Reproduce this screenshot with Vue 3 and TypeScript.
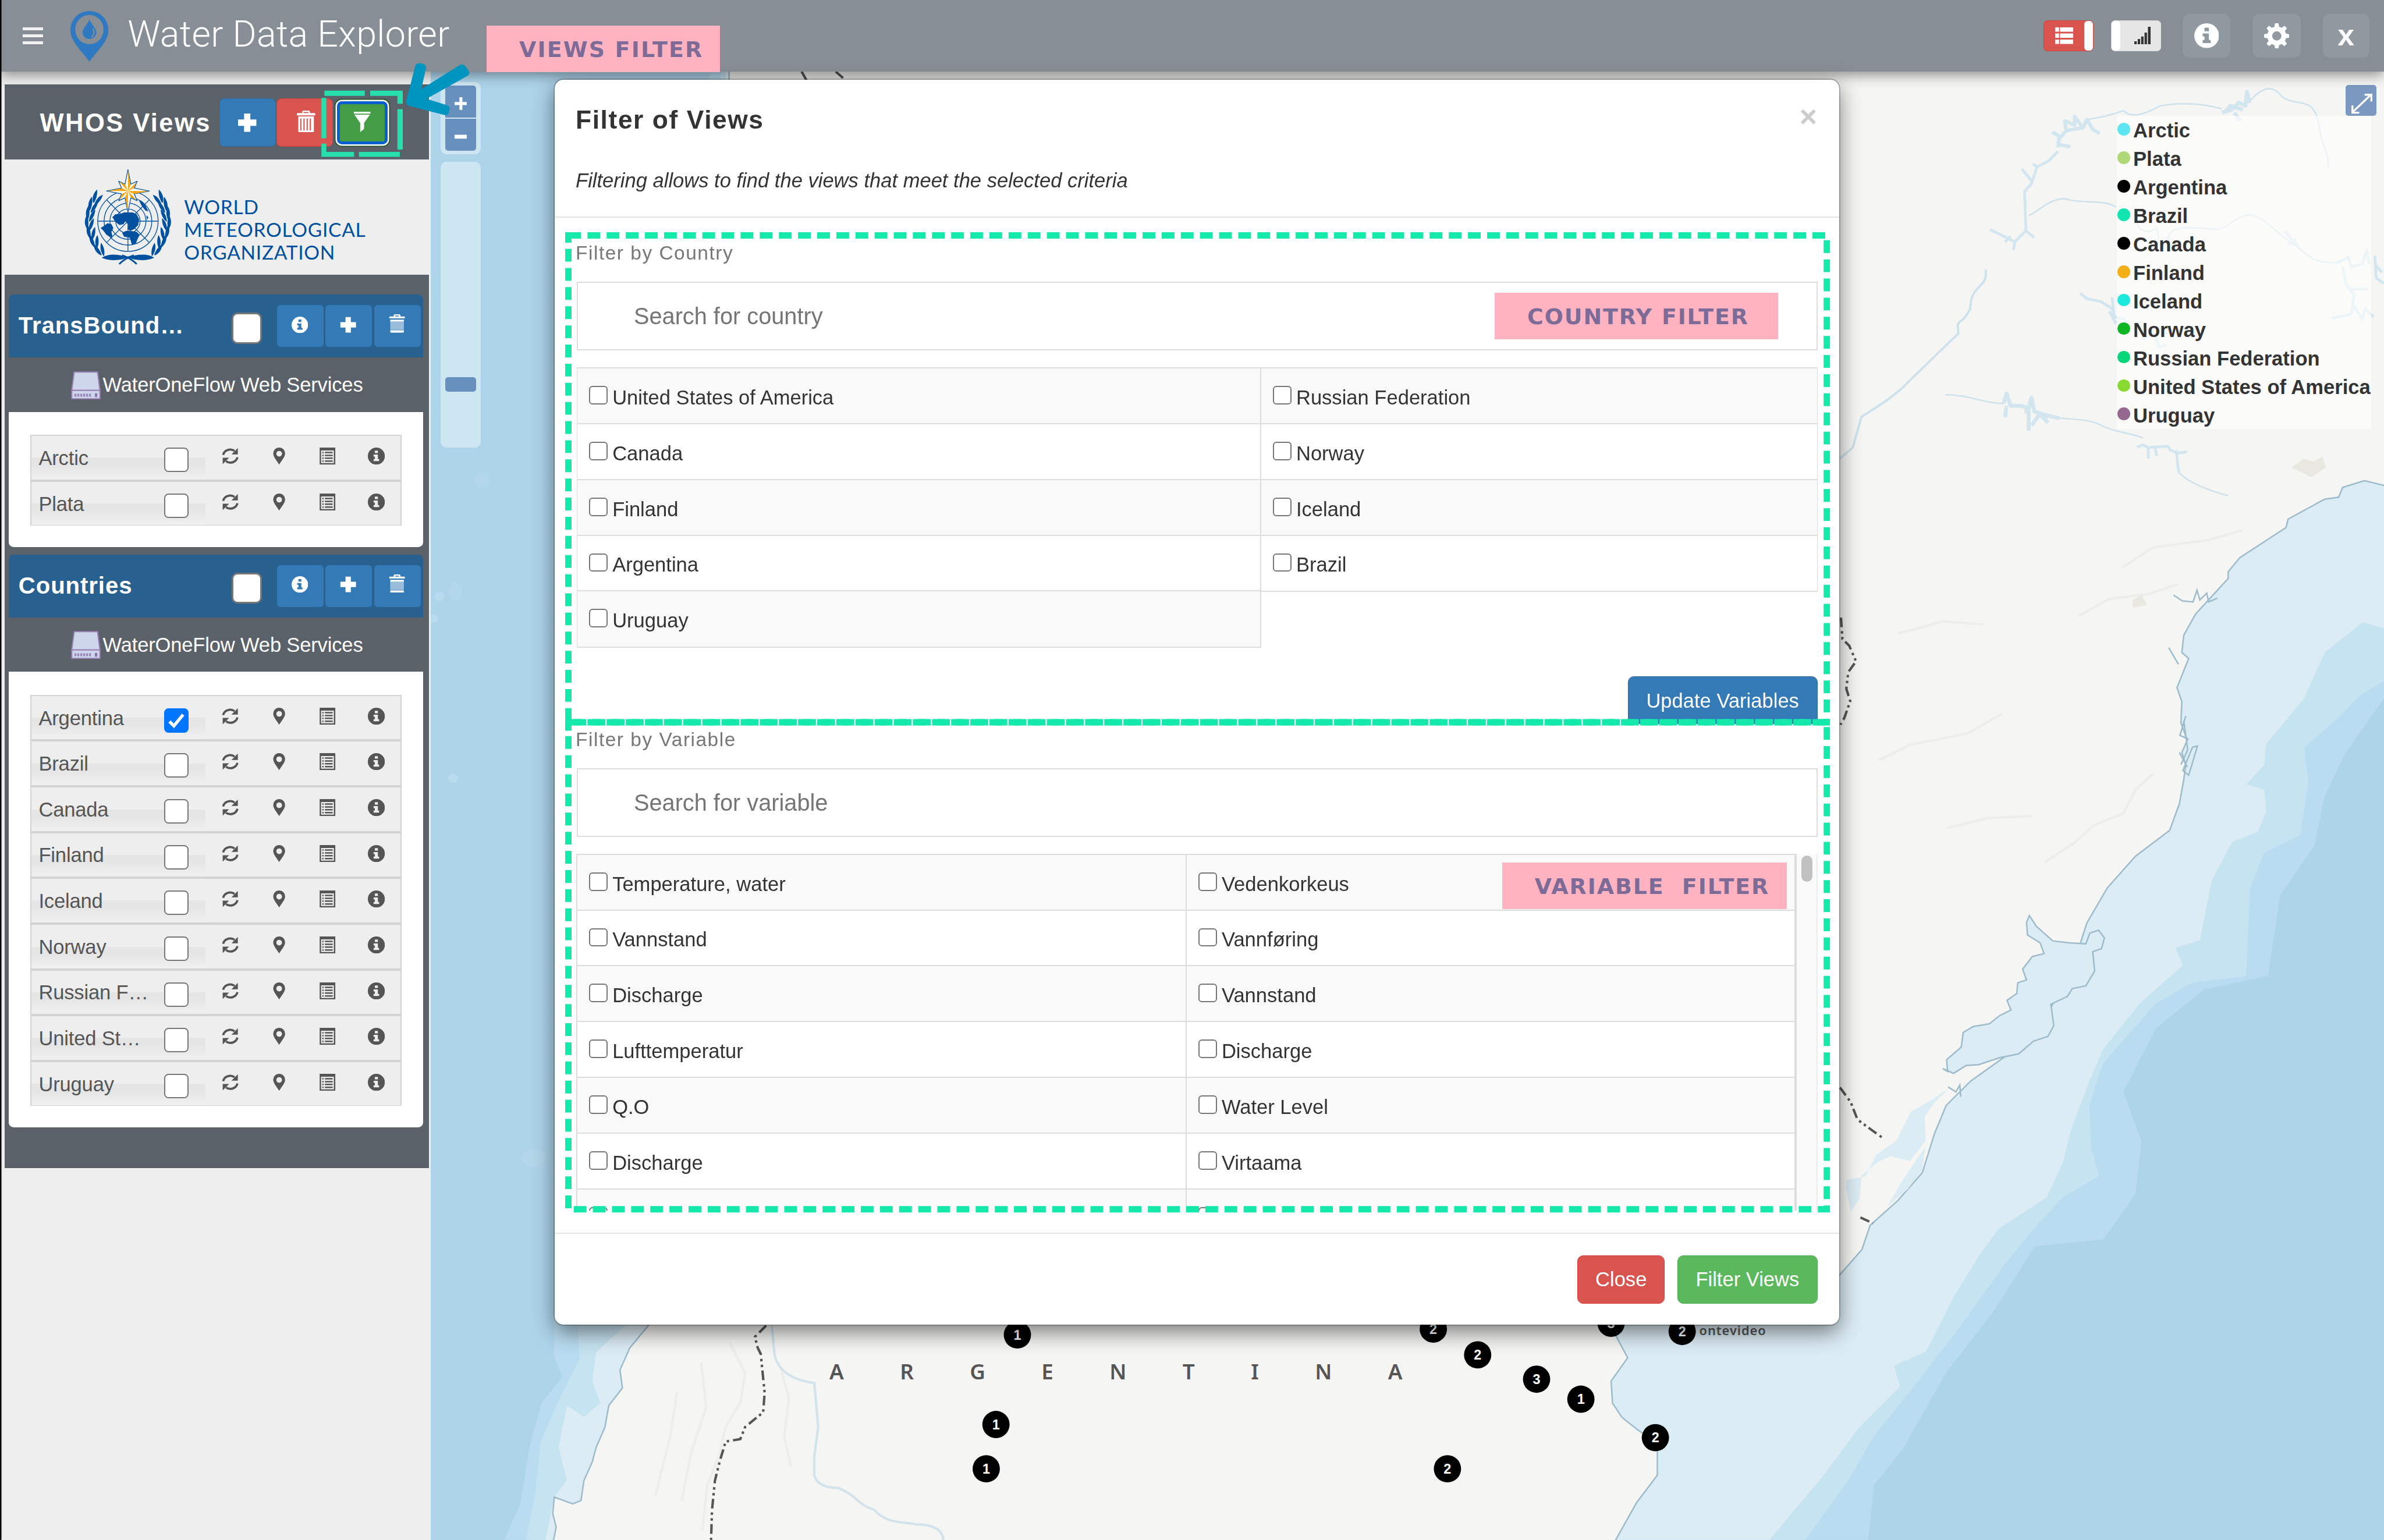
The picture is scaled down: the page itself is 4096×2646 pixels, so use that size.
<script setup lang="ts">
interface Row { name: string; checked?: boolean }
interface Group { title: string; rows: Row[] }
interface Legend { name: string; color: string }
interface Pin { x: number; y: number; n: number }

const groups: Group[] = [
  { title: 'TransBound…', rows: [{ name: 'Arctic' }, { name: 'Plata' }] },
  {
    title: 'Countries',
    rows: [
      { name: 'Argentina', checked: true }, { name: 'Brazil' }, { name: 'Canada' }, { name: 'Finland' },
      { name: 'Iceland' }, { name: 'Norway' }, { name: 'Russian F…' }, { name: 'United St…' }, { name: 'Uruguay' },
    ],
  },
]
const rowIcons: string[] = ['refresh', 'marker', 'list', 'info']
const groupIcons: string[] = ['info', 'plus', 'trash']

const countries: string[] = [
  'United States of America', 'Russian Federation', 'Canada', 'Norway', 'Finland',
  'Iceland', 'Argentina', 'Brazil', 'Uruguay',
]
const variables: string[] = [
  'Temperature, water', 'Vedenkorkeus', 'Vannstand', 'Vannføring', 'Discharge', 'Vannstand',
  'Lufttemperatur', 'Discharge', 'Q.O', 'Water Level', 'Discharge', 'Virtaama', '', '',
]
const isShaded = (i: number): boolean => Math.floor(i / 2) % 2 === 0

const legend: Legend[] = [
  { name: 'Arctic', color: '#5ee5f0' },
  { name: 'Plata', color: '#b0d878' },
  { name: 'Argentina', color: '#000000' },
  { name: 'Brazil', color: '#12e6b0' },
  { name: 'Canada', color: '#000000' },
  { name: 'Finland', color: '#f4ae18' },
  { name: 'Iceland', color: '#1de8de' },
  { name: 'Norway', color: '#10b524' },
  { name: 'Russian Federation', color: '#06d679' },
  { name: 'United States of America', color: '#88d932' },
  { name: 'Uruguay', color: '#93698f' },
]

const pins: Pin[] = [
  { x: 2089, y: 2741, n: 1 }, { x: 2045, y: 2925, n: 1 }, { x: 2025, y: 3016, n: 1 },
  { x: 2943, y: 2729, n: 2 }, { x: 3034, y: 2782, n: 2 }, { x: 3155, y: 2832, n: 3 },
  { x: 3246, y: 2873, n: 1 }, { x: 3399, y: 2952, n: 2 }, { x: 2972, y: 3016, n: 2 },
  { x: 3308, y: 2717, n: 3 }, { x: 3454, y: 2734, n: 2 },
]

// One laurel branch: leaves along a curve, mirrored for the other side.
const leaves = [
  { x: -64, y: -48, a: 12 }, { x: -73, y: -33, a: 6 }, { x: -78, y: -15, a: 0 }, { x: -80, y: 4, a: -6 },
  { x: -76, y: 23, a: -14 }, { x: -69, y: 41, a: -24 }, { x: -58, y: 58, a: -38 },
]
</script>

<template>
  <div class="app">
    <svg class="defs" width="0" height="0">
      <symbol id="plus" viewBox="0 0 34 34"><path d="M11.500 1h11v10.500h10.500v11H22.500V33h-11V22.500H1v-11h10.500z" /></symbol>
      <symbol id="trash" viewBox="0 0 34 38">
        <path d="M10 4.500V2.500Q10 0 12.500 0h9Q24 0 24 2.500v2h7.500q1.500 0 1.500 1.500v2.500H1V6q0-1.500 1.500-1.500zM13 2.800v1.700h8V2.800z" fill-rule="evenodd" />
        <path d="M3 11h28v3.500H3z" /><path d="M3 14h28v18H3z" opacity=".5" />
        <path d="M3 33h28v2.500q0 2.500-2.500 2.500h-23Q3 38 3 35.500z" />
      </symbol>
      <symbol id="bin" viewBox="0 0 38 45">
        <path d="M11 5V3q0-3 3-3h10q3 0 3 3v2h9q2 0 2 2v3H0V7q0-2 2-2zM14 3v2h10V3z" fill-rule="evenodd" />
        <path d="M3 12h32v30q0 3-3 3H6q-3 0-3-3zM7 16v25h2.500V16zm6.500 0v25H16V16zm6.500 0v25h2.500V16zm6.500 0v25H29V16z" fill-rule="evenodd" />
      </symbol>
      <symbol id="info" viewBox="0 0 34 34">
        <path fill-rule="evenodd" d="M17 0a17 17 0 1 1 0 34a17 17 0 1 1 0-34zM14 6h6v5h-6zM11.500 14H20v9h2.500v4h-11v-4H14v-5h-2.500z" />
      </symbol>
      <symbol id="refresh" viewBox="0 0 36 36">
        <path d="M3 15.500A15 13.500 0 0 1 27 7" fill="none" stroke="currentColor" stroke-width="4.600" />
        <path d="M34 1v13.500H20.500z" />
        <path d="M33 20.500A15 13.500 0 0 1 9 29" fill="none" stroke="currentColor" stroke-width="4.600" />
        <path d="M2 35V21.500h13.500z" />
      </symbol>
      <symbol id="marker" viewBox="0 0 36 36">
        <path fill-rule="evenodd" d="M18 0a12.500 12.500 0 0 1 12.500 13C30.500 20 22 29 18 36C14 29 5.500 20 5.500 13A12.500 12.500 0 0 1 18 0zm0 7a6 6 0 1 0 0 12a6 6 0 1 0 0-12z" />
      </symbol>
      <symbol id="list" viewBox="0 0 36 36">
        <path fill-rule="evenodd" d="M1.500 0h33v36h-33zM4.500 6v27h27V6z" />
        <path d="M7 9h3v3H7zm5.500 0H29v3H12.500zM7 15h3v3H7zm5.500 0H29v3H12.500zM7 21h3v3H7zm5.500 0H29v3H12.500zM7 27h3v3H7zm5.500 0H29v3H12.500z" />
      </symbol>
      <symbol id="server" viewBox="0 0 61 58">
        <path d="M6.500 1.500h48L59.500 39v17.500h-58V39z" fill="#cdd6ea" stroke="#9a7fb5" stroke-width="2.500" />
        <path d="M1.500 39h58" stroke="#9a7fb5" stroke-width="2.500" />
        <path d="M7 49h36" stroke="#9a86bd" stroke-width="6" stroke-dasharray="4 2" /><path d="M49 45h5v8h-5z" fill="#8d74ae" />
      </symbol>
    </svg>

    <!-- Base map -->
    <svg class="map" viewBox="0 0 4895 3162">
      <rect width="4895" height="3162" fill="#aed4ea" />
      <path fill="#b9dcf0" d="M1460 147H4895V1434L4814 1549 4773 1636 4752 1737 4682 1838 4657 2004 4525 2032 4426 2112 4360 2242 4397 2343 4385 2451 4319 2545 4178 2559 4096 2689 3996 2819 3906 2977 3848 3049 3836 3162H1035L1069 3086 1087 2972 1112 2881 1155 2827 1138 2786V2700L1300 2400 1440 800 1420 300z" />
      <path fill="#c6e3f1" d="M1480 147H4895V1398L4847 1427 4798 1477 4731 1535 4740 1607 4723 1715 4649 1751 4620 1823 4612 2004 4500 2018 4426 2061 4318 2184 4290 2270 4294 2357 4310 2415 4236 2458 4170 2530 4112 2602 4029 2718 3930 2847 3848 2948 3798 3035 3707 3162H1080L1100 3060 1110 2960 1150 2870 1190 2790 1185 2700 1480 800z" />
      <path fill="#dcecf5" d="M1490 147H4895V1290L4851 1278 4773 1340 4731 1434 4653 1528 4649 1571 4612 1611 4649 1621 4653 1665 4636 1708 4583 1729 4541 1809 4517 1931 4467 1946 4482 1982 4393 2061 4318 2155 4290 2220 4252 2321 4236 2386 4203 2458 4104 2523 4067 2573 4013 2660 3955 2775 3889 2804 3901 2847 3815 2934 3740 3035 3633 3162H1120L1138 3074 1164 3040 1147 2972 1164 2886 1199 2909 1233 2881 1216 2836 1224 2777 1285 2720 1480 1800z" />
      <g fill="#bfe0ee" opacity=".6">
        <circle cx="902" cy="1224" r="10" /><circle cx="890" cy="1270" r="9" /><ellipse cx="935" cy="1215" rx="14" ry="20" opacity=".5" />
        <circle cx="930" cy="1598" r="10" /><ellipse cx="1095" cy="2378" rx="24" ry="18" opacity=".6" /><circle cx="990" cy="985" r="16" opacity=".5" />
      </g>
      <path fill="#f5f5f3" stroke="#9dbbca" stroke-width="3" d="M1497 120H4900V998L4855 987 4810 1001 4802 1021 4773 1025 4698 1066 4694 1083 4599 1145 4575 1174V1188L4508 1261 4484 1304 4480 1340 4494 1352 4470 1412 4480 1441 4478 1484 4491 1520 4480 1545 4488 1570 4484 1600 4475 1650 4455 1705 4385 1758 4327 1823 4285 1895 4257 1982 4211 2069 4137 2155 4046 2220 3996 2270 3972 2328 3947 2408 3897 2465 3840 2516 3823 2566 3794 2599 3740 2660 3560 2715 3320 2600 3317 2741 3342 2788 3308 2836 3311 2881 3330 2910 3360 2934 3403 2965V3029L3360 3086 3313 3170H1135L1142 3136 1135 3108 1138 3074 1176 3088 1193 3081 1199 3040 1216 3002 1224 2972 1242 2931 1250 2886 1278 2850 1273 2813 1293 2768 1331 2722 1497 1200z" />

      <!-- Soft relief along the ranges -->
      <g fill="none" stroke="#e9e9e6" stroke-width="5" stroke-linecap="round" opacity=".7">
        <path d="M1500 2760l30 60-10 60-30 50-14 60-24 60-10 90M1600 2800l20 70-10 80 14 60M1440 2800l10 90-30 90-20 100M1390 2860l-14 90-30 120" />
        <path d="M4420 1590l-34 30-26 50-60 24-40 36-60 40M4470 1200l-60 20-80 10-60 34M4600 1090l-70 20-110 14-60 40M3900 1300l90-24 80 6M3860 1560l60-30 120-24 70-40M4000 1700l80-20 90-4" />
      </g>

      <!-- Coastal lagoons -->
      <g fill="#dcecf5" stroke="#9dbbca" stroke-width="3">
        <path d="M3999 2200l-2-24 30-26 4-30 20-12 34-6 20-16 24-12-8-20 20-14 2-22 18-6-8-22 20-26 24-6-8-22-26-16-2-26 6-14 14 22 34 30 34 4 34 2 8-22 18-6 12 16-6 22-18 6 4 40-18 30-28 6-10 16-34 16 6 44-12 22-30 10-30 26-40 8-42 14-26 2-26 16-22-10z" />
        <path stroke-width="0" d="M3792 2422l38-6 22-44 42-30 30-60 30-16 46-30-26 26-22 30 2 50-32 42-40-10-26 12-34 28-4 48-18 26-10-52z" />
        <path stroke-width="0" d="M3875 2478l30-52 40-60 8-8-6 44-30 40z" />
        <path fill="none" d="M4463 1222l18 12 22 2 8-24 6 20 14-14 4 18 18-8M4453 1330l20 34M4484 1480l8 60-14 30M4512 1532l-18 60-12-10 20-48zM4475 1545l16 30M4488 1470l-12 40 18 8M4000 2232l16 10 8-14 2 24" />
      </g>

      <!-- Rivers and reservoirs -->
      <g transform="translate(4000 0) scale(.5708)" fill="none" stroke="#cde1ec" stroke-linejoin="round">
        <g stroke-width="5">
          <path d="M500 430C560 420 600 410 630 398C660 425 700 415 760 382C840 365 930 375 985 392M1085 365C1120 320 1160 305 1190 335C1220 375 1260 360 1300 380C1340 410 1330 470 1350 520Q1368 560 1368 600" />
          <path d="M290 775C330 760 360 715 420 715C480 735 560 715 605 745M680 800C690 850 740 830 750 820L758 860M790 870C790 800 880 820 960 825C1020 820 1020 780 1090 772C1150 790 1190 850 1260 890C1320 950 1360 945 1410 945" />
          <path d="M135 970C145 1040 80 1020 80 1110C40 1190 30 1130 37 1200L0 1235L-175 1405L-220 1440L-312 1500L-343 1610L-390 1650" stroke-width="8" />
          <path d="M-10 1420C80 1420 120 1450 200 1452M350 1500C480 1510 520 1510 560 1535C620 1560 650 1555 700 1575M830 1700Q880 1750 1007 1783" />
        </g>
        <g stroke="#d3e6f0" stroke-width="10">
          <path d="M395 545L360 580 320 600 300 660 275 690 280 830 240 870 200 850 150 825M280 830L310 855M300 650L265 608M240 870L235 900M320 600L305 590M205 870L225 850" />
          <path d="M395 530L400 490 375 475M400 500L425 470 420 435 455 450 455 420 485 460 500 430 520 465 545 480M400 520L440 528M425 470L480 460" stroke-width="13" />
          <path d="M985 405L1020 395 1045 370 1070 380 1075 330 1085 370M1000 400L1015 380 1060 395M1030 405L1050 435" stroke-width="14" />
          <path d="M1210 830L1235 860 1260 885M1225 880L1250 860M1400 945L1440 925 1450 960 1490 950 1505 900 1515 950M1420 960L1430 1020 1460 1060 1450 1130 1380 1145M1460 1100L1490 1150 1500 1110 1530 1140M1440 1040L1510 1040M1535 920L1540 1000 1568 1020M1535 950L1560 980" />
          <path d="M475 1055L500 1075 550 1085 590 1110 600 1140 640 1150M580 1120L605 1165M590 1070L595 1120M700 1220L740 1200 760 1250 785 1240" />
          <path d="M200 1450L210 1415 225 1460 265 1460 290 1470 300 1430 310 1480 340 1490 400 1505M205 1500L210 1460M290 1550V1480L275 1480M300 1530L330 1490 360 1520" stroke-width="14" />
          <path d="M680 1610L700 1600 720 1610 790 1605 800 1620 830 1630 860 1625M720 1610V1650M745 1610L750 1640M820 1620L830 1700" />
        </g>
      </g>
      <path fill="none" stroke="#d3e3ec" stroke-width="5" d="M1585 2722L1590 2780Q1600 2830 1672 2840L1680 2930 1672 2990V3030Q1680 3055 1720 3055C1760 3070 1760 3090 1795 3100C1820 3130 1860 3125 1880 3130Q1935 3130 1937 3162" />

      <!-- Country borders -->
      <g fill="none" stroke="#555" stroke-width="5" stroke-dasharray="20 8 5 7 5 7">
        <path d="M1573 2722L1550 2745 1556 2768 1562 2780 1566 2820 1570 2860 1567 2900 1530 2930 1520 2955 1490 2960 1478 3000 1468 3040 1462 3100 1460 3162" />
        <path d="M3780 1268l3 44 14 14 14 32-16 22-4 34 8 26-12 34-8 14M3778 2233l22 30 14 36 30 22 25 18M3820 2500l26 12" />
        <path d="M1646 147l10 18M1716 147l16 14" />
      </g>
      <path fill="#e8e8e0" d="M4705 960l25-18 20 6 18-10 8 22-30 20zM4378 1232l20-10 10 20-28 6z" />

      <text class="country-name" x="1703" y="2832">ARGENTINA</text>
      <text class="city" x="3489" y="2742">ontevideo</text>
      <g v-for="(p, i) in pins" :key="i">
        <circle :cx="p.x" :cy="p.y" r="28" />
        <text class="pin" :x="p.x" :y="p.y + 10">{{ p.n }}</text>
      </g>
    </svg>

    <header class="topbar">
      <span class="burger"><i></i><i></i><i></i></span>
      <svg class="brand" viewBox="0 0 78 104">
        <path fill="#2f79c2" fill-rule="evenodd" d="M39 0C61 0 78 17 78 40C78 62 56 80 39 104C22 80 0 62 0 40C0 17 17 0 39 0zM39 8C22 8 10 22 10 38S22 68 39 68S68 54 68 38S56 8 39 8z" />
        <path fill="#2f79c2" d="M39 17C43 28 53 35 53 44a14 13.500 0 0 1-28 0C25 35 35 28 39 17z" />
        <path d="M46 36q6 10-3 18" fill="none" stroke="#878e95" stroke-width="2.500" />
      </svg>
      <h1>Water Data Explorer</h1>
      <div class="tools">
        <span class="toggle on">
          <svg width="37" height="34" viewBox="0 0 37 34" fill="#fff"><path d="M0 0h8v9H0zm10 0h27v9H10zM0 12.500h8v9H0zm10 0h27v9H10zM0 25h8v9H0zm10 0h27v9H10z" /></svg>
          <b></b>
        </span>
        <span class="toggle off">
          <b></b>
          <svg width="34" height="36" viewBox="0 0 34 36" fill="#333"><path d="M0 30h5v6H0zm7-5h5v11H7zm7-5h5v16h-5zm7-8h5v24h-5zm7-12h6v36h-6z" /></svg>
        </span>
        <span class="tool first"><svg width="51" height="51" fill="#fff"><use href="#info" /></svg></span>
        <span class="tool">
          <svg width="52" height="52" viewBox="-26 -26 52 52">
            <circle r="14.500" fill="none" stroke="#fff" stroke-width="10" />
            <path v-for="a in 8" :key="a" d="M-5-17L-3.500-26h7L5-17z" fill="#fff" :transform="`rotate(${a * 45})`" />
          </svg>
        </span>
        <span class="tool last">x</span>
      </div>
    </header>

    <aside class="sidebar">
      <div class="views-head">
        <span class="views-title">WHOS Views</span>
        <span class="act add"><svg width="40" height="40"><use href="#plus" /></svg></span>
        <span class="act del"><svg width="38" height="45"><use href="#bin" /></svg></span>
        <span class="act filter"><svg width="34" height="42" viewBox="0 0 34 42"><path d="M0 0h34v4H0zM1 6h32L21 23v12l-8 7V23z" /></svg></span>
      </div>

      <div class="org">
        <svg width="187" height="204" viewBox="-93 -110 187 204">
          <g fill="none" stroke="#0050a0" stroke-width="1.600">
            <circle r="62" /><circle r="49" /><circle r="37" /><circle r="25" />
            <path d="M-62 0H62M0-62V62M-44-44L44 44M44-44L-44 44" />
          </g>
          <g fill="#0050a0">
            <path d="M-32-8l6-6 10-1 8-3h18l8 4 5 10-2 12-8 8-8 4-6-4 2-8-6-8-4 6-8 2-8-6zM-56 14l6-4 8-6 8 2 4 8-4 8 2 8-2 4-10-6-6-8zM-12 24l8-4h10l12 2 6 6-4 8-4 10-8 2-4-14-12-2zM22-44l8 4 6 8 6 12-6-2-8-10zM38-12l4 4-3 6z" />
            <g v-for="s in [1, -1]" :key="s" :transform="`scale(${s} 1)`">
              <g v-for="(l, i) in leaves" :key="i" :transform="`translate(${l.x} ${l.y}) rotate(${l.a})`">
                <path d="M-6 10C-11-2-7-10-3-17C0-8 0 2-4 12z" /><path d="M-2 15C-1 4 3-4 11-9C10 2 6 10-1 16z" />
              </g>
              <path d="M-54 75C-36 64-18 70 2 73C-12 82-40 82-54 75z" />
              <path d="M-18 88Q-6 76 12 70" fill="none" stroke="#0050a0" stroke-width="3.500" />
            </g>
          </g>
          <g transform="translate(0 -62)" stroke="#0050a0" stroke-width="1.500" stroke-linejoin="round">
            <path fill="#fff" d="M0-44L6-14 19-20 13-6 44 0 13 6 19 20 6 14 0 44-6 14-19 20-13 6-44 0-13-6-19-20-6-14z" />
            <g fill="#f8a60d" stroke="none">
              <path d="M0-43V0L5.500-12zM43 0H0L12 6zM0 43V0L-5.500 12zM-43 0H0L-12-6zM18-19L0 0 12-6zM18 19L0 0 5.500 13zM-18 19L0 0-12 6zM-18-19L0 0-5.500-13z" />
            </g>
          </g>
        </svg>
        <div class="org-name"><span>WORLD</span><span>METEOROLOGICAL</span><span>ORGANIZATION</span></div>
      </div>

      <div class="groups">
        <section v-for="g in groups" :key="g.title" class="group">
          <div class="group-head">
            <span class="group-title">{{ g.title }}</span>
            <input type="checkbox" class="cb big" />
            <span v-for="ic in groupIcons" :key="ic" class="gbtn">
              <svg :width="34" :height="ic === 'trash' ? 38 : 34" :class="ic"><use :href="'#' + ic" /></svg>
            </span>
          </div>
          <div class="service"><svg width="61" height="58"><use href="#server" /></svg><span>WaterOneFlow Web Services</span></div>
          <div class="group-body">
            <ul>
              <li v-for="r in g.rows" :key="r.name">
                <div class="name-cell">
                  <span>{{ r.name }}</span>
                  <input type="checkbox" class="cb mid" :checked="r.checked" />
                  <svg v-if="r.checked" class="tick" viewBox="0 0 50 50"><path d="M11 27l9 9L39 13" fill="none" stroke="#fff" stroke-width="6.500" /></svg>
                </div>
                <span v-for="ic in rowIcons" :key="ic" class="icon-cell"><svg width="35" height="35"><use :href="'#' + ic" /></svg></span>
              </li>
            </ul>
          </div>
        </section>
      </div>
    </aside>

    <!-- Map controls -->
    <div class="zoom-ctl">
      <span><svg width="26" height="26" viewBox="0 0 26 26"><path d="M10 0h6v10h10v6H16v10h-6V16H0v-6h10z" fill="#fff" /></svg></span>
      <span><svg width="26" height="26" viewBox="0 0 26 26"><path d="M0 9h26v8H0z" fill="#fff" /></svg></span>
    </div>
    <div class="zoom-slider"><i></i></div>
    <div class="expand">
      <svg width="64" height="63" viewBox="0 0 64 63" fill="none" stroke="#fff" stroke-width="4"><path d="M14 56L52 20M39 20h14v14M14 42v15h14" /></svg>
    </div>
    <ul class="legend">
      <li v-for="l in legend" :key="l.name"><i :style="{ background: l.color }"></i><span>{{ l.name }}</span></li>
    </ul>

    <div class="modal">
      <div class="modal-head">
        <span class="x">×</span>
        <h4>Filter of Views</h4>
        <p>Filtering allows to find the views that meet the selected criteria</p>
      </div>
      <div class="modal-body">
        <section class="by-country">
          <label>Filter by Country</label>
          <input type="text" class="search" placeholder="Search for country" />
          <div class="grid c">
            <div v-for="(c, i) in countries" :key="i" class="cell" :class="{ shaded: isShaded(i) }">
              <input type="checkbox" class="cb small" /><span>{{ c }}</span>
            </div>
          </div>
          <div class="update"><button class="btn primary">Update Variables</button></div>
        </section>
        <section class="by-variable">
          <label>Filter by Variable</label>
          <input type="text" class="search" placeholder="Search for variable" />
          <div class="scroller">
            <div class="grid v">
              <div v-for="(c, i) in variables" :key="i" class="cell" :class="{ shaded: isShaded(i) }">
                <input type="checkbox" class="cb small" /><span>{{ c }}</span>
              </div>
            </div>
            <div class="track"><i></i></div>
          </div>
        </section>
      </div>
      <div class="modal-foot">
        <button class="btn danger">Close</button>
        <button class="btn success">Filter Views</button>
      </div>
    </div>

    <!-- Guide marks laid over the window -->
    <svg class="marks" viewBox="0 0 4895 3162">
      <rect width="3" height="3162" fill="#000" />
      <g fill="none" stroke="#15e8ab" stroke-width="13.100" stroke-dasharray="26.200 13.100">
        <path d="M1167 483.500H3751V1483H1167z" />
        <path d="M1167 1483H3751V2483H1167z" />
      </g>
      <path fill="#15e8ab" d="M1160.500 477h13v21h-13zM1160.500 1476.500h13v24h-13z" />
      <path fill="#27dead" d="M666 186h83v11h-83zM760 186h67v27h-11v-16h-56zM816 224h11v83h-11zM737 312h84v10h-84zM660 201h10v83h-10zM660 295h10v17h57v10h-67z" />
      <path fill="#0095bf" d="M853 134Q856 129 864 130Q875 132 875 139L865 183L943 134Q953 130 957 138L963 146Q965 152 961 155L876 203L918 216Q924 219 923 225L921 233Q918 238 912 236L838 217Q833 213 834 207z" />
    </svg>
    <div class="tag t1">VIEWS FILTER</div>
    <div class="tag t2">COUNTRY FILTER</div>
    <div class="tag t3">VARIABLE&nbsp; FILTER</div>
  </div>
</template>

<style>
html, body { margin: 0; overflow: hidden; background: #aed4ea; }
</style>

<style scoped>
.app {
  position: relative; width: 4895px; height: 3162px; overflow: hidden; zoom: 0.836772;
  font-family: "Liberation Sans", Arial, sans-serif; font-size: 41.3px; color: #333; line-height: 59px;
}
.app *, .app *::before { box-sizing: border-box; }
.defs { position: absolute; }
.map, .marks { position: absolute; left: 0; top: 0; width: 4895px; height: 3162px; display: block; }
.marks { z-index: 5; pointer-events: none; }
svg { display: block; flex: none; }
ul { list-style: none; margin: 0; padding: 0; }
h1, h4, p { margin: 0; }

.country-name { font: 600 44px "Noto Sans", sans-serif; letter-spacing: 115.200px; fill: #555; }
.city { font: 600 26px "Noto Sans", sans-serif; letter-spacing: 1.200px; fill: #555; }
.pin { font: bold 28px "Liberation Sans", sans-serif; fill: #fff; text-anchor: middle; }

.topbar {
  position: relative; z-index: 2; display: flex; align-items: center; height: 147px; padding: 0 30px 0 47px;
  background: #878e95; box-shadow: 0 6px 26px rgba(0, 0, 0, .45);
}
.burger { display: flex; flex-direction: column; gap: 8px; width: 41px; }
.burger i { height: 6.500px; background: #f2f2f2; }
.brand { width: 78px; height: 104px; margin: 3px 0 0 57px; }
h1 { margin: -8px 0 0 39px; font: 300 75px/90px Roboto, "Liberation Sans", sans-serif; color: #fff; letter-spacing: .450px; white-space: nowrap; }
.tools { display: flex; align-items: center; margin-left: auto; }
.toggle { display: flex; align-items: center; width: 103px; height: 64px; border-radius: 8px; margin-right: 35px; }
.toggle b { width: 18px; height: 60px; border-radius: 7px; background: #fff; }
.toggle.on { background: #d9534f; border: 2px solid #d43f3a; padding-left: 22px; justify-content: space-between; }
.toggle.off { background: #e6e6e6; border: 2px solid #ddd; padding-right: 20px; margin-right: 44px; justify-content: space-between; }
.tool {
  display: flex; align-items: center; justify-content: center; width: 99px; height: 89px; margin-left: 45px;
  border-radius: 14px; background: #9098a0; color: #fff; font-weight: bold; font-size: 62px;
}
.tool.first { margin-left: 0; }
.tool.last { width: 96px; padding-bottom: 3px; }

.sidebar { position: relative; width: 884px; height: 3015px; padding: 26px 3px 0 9px; background: #eee; }
.views-head { display: flex; align-items: center; height: 155px; padding: 3px 0 0 73px; background: #5b6168; }
.views-title { width: 368px; margin-top: 2px; font-weight: bold; font-size: 52px; letter-spacing: 2.900px; color: #fff; white-space: nowrap; }
.act { display: flex; align-items: center; justify-content: center; width: 116px; height: 99px; border-radius: 10px; fill: #fff; margin-right: 2px; }
.add { background: #337ab7; border: 2px solid #2e6da4; }
.del { background: #d9534f; border: 2px solid #d43f3a; }
.del svg { margin: -6px 0 0 6px; }
.filter {
  width: 104px; height: 88px; margin-left: 6px; background: #449d44; border: 6px solid #0a5fd0;
  box-shadow: 0 0 0 3px #fff, 0 0 0 5px #255625;
}
.filter svg { margin-top: -4px; }

.org { display: flex; height: 236px; padding: 16px 0 0 161px; }
.org-name { display: flex; flex-direction: column; margin: 57px 0 0 21px; font: 400 40px/47px Lato, sans-serif; color: #0050a0; letter-spacing: .850px; }

.groups { display: flex; flex-direction: column; gap: 15px; height: 1834px; padding: 41px 12px 0 9px; background: #5b6168; }
.group { width: 851px; }
.group-head { display: flex; align-items: center; height: 129px; padding: 0 5px 0 20px; background: #286090; border-radius: 10px 10px 0 0; }
.group-title { width: 438px; font-weight: bold; font-size: 48px; letter-spacing: 1.100px; color: #fff; margin-top: -1px; white-space: nowrap; }
.gbtn { display: flex; align-items: center; justify-content: center; width: 95.500px; height: 86px; margin-right: 4.500px; border-radius: 7px; background: #337ab7; fill: #fff; }
.gbtn svg { margin: -5px 2px 0 0; }
.gbtn svg.trash { margin-top: -10px; }
.gbtn:last-child { margin-right: 0; }
.service { display: flex; align-items: center; gap: 4px; height: 112px; padding: 2px 0 0 128px; color: #fff; white-space: nowrap; letter-spacing: -.200px; }
.group-body { padding: 47px 44px 44px; background: #fff; border-radius: 0 0 10px 10px; }
.group-body ul { border: 3px solid #d3d3d3; border-bottom-width: 2px; }
.group-body li { display: flex; height: 94px; border-bottom: 5px solid #d3d3d3; background: #eee; }
.group-body li:last-child { height: 89px; border-bottom: 0; }
.name-cell {
  position: relative; display: flex; align-items: center; width: 358px; padding-left: 15px; color: #555; white-space: nowrap;
  background: linear-gradient(#eee 0 50%, #e5e5e5 50% 65%, #f0f0f0);
}
.name-cell > span { width: 258px; margin-top: 3px; letter-spacing: -.200px; }
.icon-cell { flex: 1; display: flex; align-items: center; justify-content: center; padding: 0 0 6px 1px; fill: #555; color: #555; }

.cb { appearance: none; flex: none; margin: 0; background: #fff; border: 3px solid #767676; }
.cb.big { width: 62px; height: 64px; margin: 9px 31px 0 0; border-width: 4px; border-radius: 12px; }
.cb.mid { width: 50px; height: 50px; margin-top: 9px; border-radius: 9px; }
.cb.mid:checked { background: #0075ff; border-color: #0075ff; margin-top: 13px; }
.tick { position: absolute; left: 273px; top: 26px; width: 50px; height: 50px; }
.cb.small { width: 38px; height: 38px; margin: -3px 10px 0 -1px; border-radius: 7px; }

.zoom-ctl, .zoom-slider { position: absolute; left: 905px; width: 82px; border-radius: 12px; background: rgba(255, 255, 255, .4); }
.zoom-ctl { top: 168px; height: 149px; padding: 8px 9px; display: flex; flex-direction: column; gap: 3px; }
.zoom-ctl span { display: flex; align-items: center; justify-content: center; height: 65px; padding-top: 9px; background: #6790bf; border-radius: 6px 6px 0 0; }
.zoom-ctl span + span { border-radius: 0 0 6px 6px; }
.zoom-slider { top: 332px; height: 587px; padding: 442px 9px 0; }
.zoom-slider i { display: block; height: 30px; border-radius: 6px; background: #6790bf; }
.expand { position: absolute; left: 4816px; top: 175px; width: 64px; height: 63px; border-radius: 6px; background: #7b98c1; }
.legend { position: absolute; left: 4346px; top: 238px; width: 523px; height: 643px; background: rgba(255, 255, 255, .6); }
.legend li { display: flex; align-items: center; gap: 6px; height: 58.500px; padding-top: 3px; font-weight: bold; white-space: nowrap; }
.legend i { flex: none; width: 26px; height: 26px; margin: -7px 0 0 2px; border-radius: 50%; }

.modal {
  position: absolute; left: 1139px; top: 164px; z-index: 3; display: flex; flex-direction: column;
  width: 2638px; height: 2556px; background: #fff; border-radius: 18px;
  box-shadow: 0 0 0 2px rgba(0, 0, 0, .25), 0 15px 45px rgba(0, 0, 0, .5);
}
.modal-head { position: relative; height: 283px; padding: 52px 43px 0; border-bottom: 3px solid #e5e5e5; }
.modal-head h4 { font-size: 53px; line-height: 60px; letter-spacing: 1.900px; }
.modal-head p { margin-top: 66px; font-style: italic; }
.x { position: absolute; right: 46px; top: 44px; font: bold 62px/64px "Liberation Sans", sans-serif; color: #ccc; }
.modal-body { flex: 1; padding: 0 45px; }
.by-country { height: 1040px; padding-top: 45px; overflow: hidden; }
.by-variable { padding-top: 4px; }
label { display: block; margin: 0 0 31px; text-indent: -2px; font-size: 40px; line-height: 56px; letter-spacing: 1.800px; color: #777; }
.search {
  display: block; width: 2548px; height: 140px; padding: 2px 0 0 115px; border: 3px solid #ddd; background: #fff;
  font: 47.500px "Liberation Sans", sans-serif; outline: none;
}
.search::placeholder { color: #757575; opacity: 1; }
.grid { display: grid; grid-auto-rows: 114.500px; }
.grid.c { grid-template-columns: 1404px 1143px; margin: 35.500px 0 0 -1px; width: 2547px; }
.grid.v { grid-template-columns: 1251px 1251px; width: 2502px; flex: none; }
.cell { display: flex; align-items: center; padding-left: 25px; border: 3px solid #ddd; margin: 0 -3px -3px 0; background: #fff; white-space: nowrap; }
.cell span { margin-top: 8px; }
.cell.shaded { background: #f9f9f9; }
.update { display: flex; justify-content: flex-end; margin-top: 62px; }
.btn { height: 99px; border: 2px solid; border-radius: 12px; color: #fff; font: 41.300px "Liberation Sans", sans-serif; padding: 2px 0 0; white-space: nowrap; }
.primary { width: 390px; background: #337ab7; border-color: #2e6da4; }
.danger { width: 179px; background: #d9534f; border-color: #d43f3a; }
.success { width: 288px; background: #5cb85c; border-color: #4cae4c; }
.scroller { display: flex; height: 733px; margin: 35px 0 0 -1px; overflow: hidden; }
.track { position: relative; flex: 1; padding: 4px 8px 0 9px; background: #fafafa; border-left: 5px solid #ddd; border-right: 3px solid #ececec; }
.track i { display: block; height: 53px; border-radius: 12px; background: #c1c1c1; }
.modal-foot { display: flex; justify-content: flex-end; gap: 26px; height: 189px; padding: 44px 45px 0; border-top: 3px solid #e5e5e5; }

.tag {
  position: absolute; z-index: 6; height: 96px; padding-left: 67px; background: #ffb3c1; color: #7d6b97;
  font: bold 45.300px/98px "DejaVu Sans", Verdana, sans-serif; white-space: pre;
}
.t1 { left: 999px; top: 52px; width: 479px; letter-spacing: 2.600px; }
.t2 { left: 3069px; top: 601px; width: 582px; letter-spacing: 2.200px; }
.t3 { left: 3084px; top: 1771px; width: 585px; letter-spacing: 2.300px; }
</style>
